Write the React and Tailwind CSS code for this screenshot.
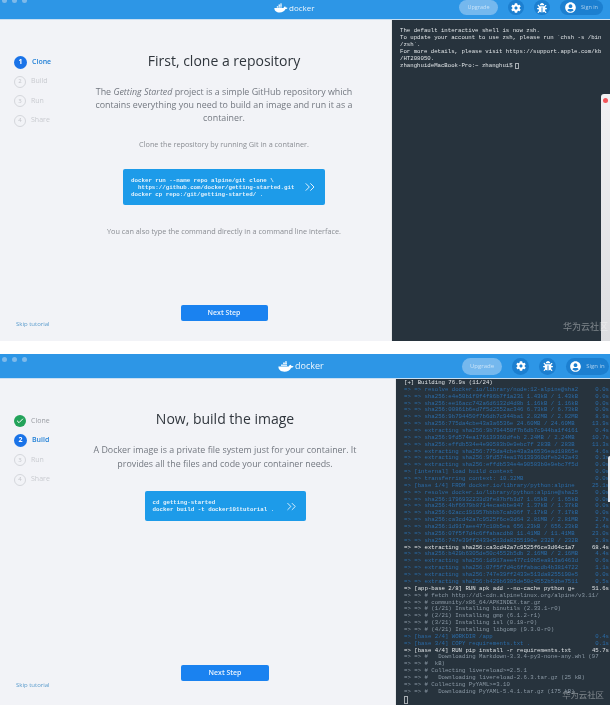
import React from "react";
import { ChevronsRight, Check } from "lucide-react";
import { FaCog, FaBug, FaUserCircle } from "react-icons/fa";

const Whale = ({ className }) => (
  <svg viewBox="0 0 40 26" className={className} fill="white">
    <rect x="8" y="8" width="4" height="4" />
    <rect x="13" y="8" width="4" height="4" />
    <rect x="18" y="8" width="4" height="4" />
    <rect x="13" y="3" width="4" height="4" />
    <rect x="18" y="3" width="4" height="4" />
    <rect x="18" y="0" width="4" height="3" />
    <path d="M1 13h26c1-3 4-5 5-4 1 1 2 3 2 3 2-1 4 0 5 1-2 3-5 3-6 3-3 6-9 10-17 10C7 26 1 21 1 13z" />
  </svg>
);

const TopBar = ({ h, dots, logoW, logoText, logoPos, pillH, iconW, upgradeW, signW, pad, upText }) => (
  <div className={`relative flex items-center justify-end gap-[10px] bg-[#2d96e6] ${h} ${pad}`}>
    {dots}
    <div className={`absolute top-0 flex items-center gap-[1px] ${logoPos}`}>
      <Whale className={logoW} />
      <span className={`font-['Open_Sans',sans-serif] text-white/90 ${logoText}`}>docker</span>
    </div>
    <div className={`flex items-center justify-center rounded-full bg-[#75b8ee] text-white/60 font-['Open_Sans',sans-serif] ${pillH} ${upgradeW} ${upText}`}>Upgrade</div>
    <div className={`flex items-center justify-center rounded-full bg-[#1c7fd0] ${pillH} ${iconW}`}><FaCog className="text-white w-[10px] h-[10px]" /></div>
    <div className={`flex items-center justify-center rounded-full bg-[#1c7fd0] ${pillH} ${iconW}`}><FaBug className="text-white w-[10px] h-[10px]" /></div>
    <div className={`flex items-center justify-center gap-[5px] rounded-full bg-[#1c7fd0] text-white/60 font-['Open_Sans',sans-serif] ${pillH} ${signW} ${upText}`}><FaUserCircle className="text-white w-[11px] h-[11px]" />Sign in</div>
  </div>
);

const Num = ({ n, active }) => (
  <span className={active
    ? "flex h-[13px] w-[13px] items-center justify-center rounded-full bg-[#1a73e8] text-[7px] font-bold text-white"
    : "flex h-[12px] w-[12px] items-center justify-center rounded-full border border-[#d5d7dc] text-[6px] text-[#c3c5ca]"}>{n}</span>
);

const Steps = ({ done, current }) => (
  <div className="flex flex-col gap-[7.5px] pl-[14px] pt-[36px] font-['Open_Sans',sans-serif]">
    {["Clone", "Build", "Run", "Share"].map((s, i) => {
      const n = i + 1;
      const isDone = n <= done;
      const active = n === current;
      return (
        <div key={s} className="flex h-[12px] items-center gap-[5px] text-[7px]">
          {isDone ? (
            <span className="flex h-[12px] w-[12px] items-center justify-center rounded-full bg-[#23a35a]"><Check className="h-[8px] w-[8px] text-white" strokeWidth={3} /></span>
          ) : <Num n={n} active={active} />}
          <span className={active ? "font-semibold text-[#1f7fd6]" : isDone ? "text-[#9a9da3]" : "text-[#c9cbd0]"}>{s}</span>
        </div>
      );
    })}
  </div>
);

const blue = "text-[#2a6ba8]";
const white = "text-[#dfe3e6]";
const dim = "text-[#8b99a5]";

const rows = [
  ["[+] Building 76.9s (11/24)", "", white],
  ["=> => resolve docker.io/library/node:12-alpine@sha2", "0.0s", blue],
  ["=> => sha256:e4e50b1f0f4f86b7f1a231 1.43kB / 1.43kB", "0.0s", blue],
  ["=> => sha256:ee16acc742a6d6132d4d8b 1.16kB / 1.16kB", "0.0s", blue],
  ["=> => sha256:00861b6ed7f5d2552ac346 6.73kB / 6.73kB", "0.0s", blue],
  ["=> => sha256:9b794450f7b6db7c944ba1 2.82MB / 2.82MB", "8.9s", blue],
  ["=> => sha256:775da4cbe43a3a6536e 24.60MB / 24.60MB", "13.9s", blue],
  ["=> => extracting sha256:9b794450f7b6db7c944ba1f4161", "0.4s", blue],
  ["=> => sha256:9fd574ea176139360dfeb 2.24MB / 2.24MB", "10.7s", blue],
  ["=> => sha256:effdb534e4e90583b0e9ebc7f 283B / 283B", "11.3s", blue],
  ["=> => extracting sha256:775da4cbe43a3a6536ead18865e", "4.6s", blue],
  ["=> => extracting sha256:9fd574ea176139360dfeb242a43", "0.3s", blue],
  ["=> => extracting sha256:effdb534e4e90583b0e9ebc7f5d", "0.0s", blue],
  ["=> [internal] load build context", "0.0s", blue],
  ["=> => transferring context: 10.32MB", "0.0s", blue],
  ["=> [base 1/4] FROM docker.io/library/python:alpine", "25.1s", blue],
  ["=> => resolve docker.io/library/python:alpine@sha25", "0.0s", blue],
  ["=> => sha256:1796932233d3fe87bfb3d7 1.65kB / 1.65kB", "0.0s", blue],
  ["=> => sha256:4bf6679b8714ecaebbe847 1.37kB / 1.37kB", "0.0s", blue],
  ["=> => sha256:62acc191957bbbb7cab06f 7.17kB / 7.17kB", "0.0s", blue],
  ["=> => sha256:ca3cd42a7c9525f6ce3d64 2.81MB / 2.81MB", "2.7s", blue],
  ["=> => sha256:1d917aee477c10b5ea 656.23kB / 656.23kB", "2.4s", blue],
  ["=> => sha256:07f5f7d4c6ffabacdb8 11.41MB / 11.41MB", "23.0s", blue],
  ["=> => sha256:747e39ff2433e513da8255190e 232B / 232B", "2.8s", blue],
  ["=> => extracting sha256:ca3cd42a7c9525f6ce3d64c1a7", "68.4s", white],
  ["=> => sha256:b429b6305de50c4552b5db 2.16MB / 2.16MB", "4.4s", blue],
  ["=> => extracting sha256:1d917aee477c10b5ea813a6463d", "0.6s", blue],
  ["=> => extracting sha256:07f5f7d4c6ffabacdb4b3814722", "1.1s", blue],
  ["=> => extracting sha256:747e39ff2433e513da8255190e5", "0.0s", blue],
  ["=> => extracting sha256:b429b6305de50c4552b5dbe7511", "0.5s", blue],
  ["=> [app-base 2/8] RUN apk add --no-cache python g+", "51.6s", white],
  ["=> => # fetch http://dl-cdn.alpinelinux.org/alpine/v3.11/", "", dim],
  ["=> => # community/x86_64/APKINDEX.tar.gz", "", dim],
  ["=> => # (1/21) Installing binutils (2.33.1-r0)", "", dim],
  ["=> => # (2/21) Installing gmp (6.1.2-r1)", "", dim],
  ["=> => # (3/21) Installing isl (0.18-r0)", "", dim],
  ["=> => # (4/21) Installing libgomp (9.3.0-r0)", "", dim],
  ["=> [base 2/4] WORKDIR /app", "0.4s", blue],
  ["=> [base 3/4] COPY requirements.txt .", "0.1s", blue],
  ["=> [base 4/4] RUN pip install -r requirements.txt", "45.7s", white],
  ["=> => #   Downloading Markdown-3.3.4-py3-none-any.whl (97", "", dim],
  ["=> => #  kB)", "", dim],
  ["=> => # Collecting livereload>=2.5.1", "", dim],
  ["=> => #   Downloading livereload-2.6.3.tar.gz (25 kB)", "", dim],
  ["=> => # Collecting PyYAML>=3.10", "", dim],
  ["=> => #   Downloading PyYAML-5.4.1.tar.gz (175 kB)", "", dim],
];

const Dots = ({ className }) => (
  <div className={`absolute left-[2px] flex gap-[5px] ${className}`}>
    <span className="h-[5px] w-[5px] rounded-full bg-[#7db9ea]" />
    <span className="h-[5px] w-[5px] rounded-full bg-[#7db9ea]" />
    <span className="h-[5px] w-[5px] rounded-full bg-[#7db9ea]" />
  </div>
);

const sans = "font-['Open_Sans',sans-serif]";
const mono = "font-['Liberation_Mono',monospace]";

export default function App() {
  return (
    <div className="relative h-[706px] w-[610px] overflow-hidden bg-white blur-[0.35px]">
      <div className="relative flex h-[341px] flex-col">
        <TopBar h="h-[19px]" pad="pl-0 pr-[7px] pb-[4px]" logoW="w-[14px] h-[10px]" logoText="text-[8px] leading-[15px]" logoPos="left-[274px]" pillH="h-[15px]" iconW="w-[16px]" upgradeW="w-[39px]" signW="w-[43px]" upText="text-[5.5px]" dots={<Dots className="top-[-2px]" />} />
        <div className="flex min-h-0 flex-1 border-t border-[#c9dff2]">
          <div className="flex w-[62px] flex-col justify-between bg-[#f2f3f7]">
            <Steps done={0} current={1} />
            <span className={`${sans} pb-[12px] pl-[16px] text-[6px] text-[#5b9ccd]`}>Skip tutorial</span>
          </div>
          <div className="flex w-[329px] flex-col items-center bg-[#f2f3f7] pr-[5px]">
            <h1 className={`${sans} mt-[31px] text-[14px] leading-[20px] text-[#30363d]`}>First, clone a repository</h1>
            <p className={`${sans} mt-[14px] whitespace-nowrap text-center text-[8.9px] leading-[13px] text-[#737880]`}>The <em>Getting Started</em> project is a simple GitHub repository which<br />contains everything you need to build an image and run it as a<br />container.</p>
            <p className={`${sans} mt-[15px] text-[7.3px] leading-[11px] text-[#8a8d93]`}>Clone the repository by running Git in a container.</p>
            <div className="mt-[19px] flex h-[36px] w-[202px] items-center justify-between rounded-[2px] bg-[#1d9be9] pl-[8px] pr-[7px]">
              <pre className={`${mono} text-[5.8px] font-bold leading-[7px] text-[#e4f2fc]`}>{"docker run --name repo alpine/git clone \\\n  https://github.com/docker/getting-started.git\ndocker cp repo:/git/getting-started/ ."}</pre>
              <ChevronsRight className="h-[16px] w-[16px] text-white" strokeWidth={1.3} />
            </div>
            <p className={`${sans} mt-[21px] text-[7.3px] leading-[11px] text-[#8a8d93]`}>You can also type the command directly in a command line interface.</p>
            <button className={`${sans} mt-[68px] h-[16px] w-[87px] rounded-[2px] bg-[#1a82f0] text-[7px] font-semibold text-white/90`}>Next Step</button>
          </div>
          <div className={`${mono} relative flex-1 border-l border-[#e5e7ea] bg-[#27333d] pl-[8px] pt-[8px] text-[5.7px] leading-[6.9px] text-[#dfe3e6]`}>
            <p>The default interactive shell is now zsh.</p>
            <p>To update your account to use zsh, please run `chsh -s /bin</p>
            <p>/zsh`.</p>
            <p>For more details, please visit https://support.apple.com/kb</p>
            <p>/HT208050.</p>
            <p className="flex items-center gap-[2px]">zhanghuideMacBook-Pro:~ zhanghui$ <span className="inline-block h-[6px] w-[4px] border border-[#dfe3e6]/70" /></p>
          </div>
        </div>
        <div className="absolute right-0 top-[94px] bottom-0 w-[9px] rounded-tl-[3px] bg-gradient-to-b from-[#f1f1f3] to-[#dcdde0]">
          <span className="absolute left-[2px] top-[4px] h-[5px] w-[5px] rounded-full bg-[#f2555a]" />
        </div>
        <span className="absolute bottom-[8px] right-[2px] font-['Noto_Sans_CJK_SC',sans-serif] text-[9px] text-white/40">华为云社区</span>
      </div>

      <div className="relative mt-[13px] flex h-[351px] flex-col">
        <TopBar h="h-[24px]" pad="pr-[1px]" logoW="w-[16px] h-[11px]" logoText="text-[9px] leading-[24px]" logoPos="left-[278px] bottom-0" pillH="h-[17px]" iconW="w-[17px]" upgradeW="w-[40px]" signW="w-[43px]" upText="text-[6px]" dots={<Dots className="top-[3px]" />} />
        <div className="flex min-h-0 flex-1 border-t border-[#c9dff2]">
          <div className="flex w-[60px] flex-col justify-between bg-[#f2f3f7]">
            <Steps done={1} current={2} />
            <span className={`${sans} pb-[15px] pl-[16px] text-[6px] text-[#5b9ccd]`}>Skip tutorial</span>
          </div>
          <div className="flex w-[335px] flex-col items-center bg-[#f2f3f7] pr-[5px]">
            <h1 className={`${sans} mt-[30px] text-[14px] font-medium leading-[20px] text-[#30363d]`}>Now, build the image</h1>
            <p className={`${sans} mt-[14px] whitespace-nowrap text-center text-[8.9px] leading-[14px] text-[#737880]`}>A Docker image is a private file system just for your container. It<br />provides all the files and code your container needs.</p>
            <div className="mt-[20px] flex h-[30px] w-[161px] items-center justify-between rounded-[2px] bg-[#1d9be9] pl-[8px] pr-[7px]">
              <pre className={`${mono} text-[5.8px] font-bold leading-[7px] text-[#e4f2fc]`}>{"cd getting-started\ndocker build -t docker101tutorial ."}</pre>
              <ChevronsRight className="h-[15px] w-[15px] text-white" strokeWidth={1.3} />
            </div>
            <button className={`${sans} mt-[144px] h-[16px] w-[88px] rounded-[2px] bg-[#1a82f0] text-[7px] font-semibold text-white/90`}>Next Step</button>
          </div>
          <div className={`${mono} relative flex-1 overflow-hidden whitespace-pre border-l border-[#e5e7ea] bg-[#27333d] pl-[8px] pr-[1px] pt-[1px] text-[5.7px] leading-[6.87px]`}>
            {rows.map(([t, s, c], i) => (
              <div key={i} className={`flex h-[6.87px] justify-between ${c}`}><span>{t}</span>{s && <span>{s}</span>}</div>
            ))}
            <span className="block h-[8px] w-[4px] border border-[#dfe3e6]/70" />
            <span className="absolute bottom-[7px] right-[6px] font-['Noto_Sans_CJK_SC',sans-serif] text-[8.4px] text-white/40">华为云社区</span>
            <span className="absolute right-0 top-[77px] h-[46px] w-[2px] rounded-tl-[2px] bg-[#e8e9ec]" />
          </div>
        </div>
      </div>
    </div>
  );
}
